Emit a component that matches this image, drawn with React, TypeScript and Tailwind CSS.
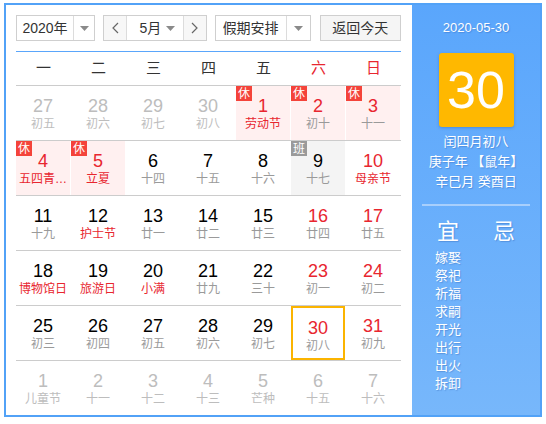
import type { ReactNode } from 'react';

type Day = {
  d: number;
  lunar: string;
  other?: boolean;
  red?: boolean;
  fest?: boolean;
  badge?: '休' | '班';
  selected?: boolean;
};

const weekdays = ['一', '二', '三', '四', '五', '六', '日'];

const rows: Day[][] = [
  [
    { d: 27, lunar: '初五', other: true },
    { d: 28, lunar: '初六', other: true },
    { d: 29, lunar: '初七', other: true },
    { d: 30, lunar: '初八', other: true },
    { d: 1, lunar: '劳动节', red: true, fest: true, badge: '休' },
    { d: 2, lunar: '初十', red: true, badge: '休' },
    { d: 3, lunar: '十一', red: true, badge: '休' },
  ],
  [
    { d: 4, lunar: '五四青…', red: true, fest: true, badge: '休' },
    { d: 5, lunar: '立夏', red: true, fest: true, badge: '休' },
    { d: 6, lunar: '十四' },
    { d: 7, lunar: '十五' },
    { d: 8, lunar: '十六' },
    { d: 9, lunar: '十七', badge: '班' },
    { d: 10, lunar: '母亲节', red: true, fest: true },
  ],
  [
    { d: 11, lunar: '十九' },
    { d: 12, lunar: '护士节', fest: true },
    { d: 13, lunar: '廿一' },
    { d: 14, lunar: '廿二' },
    { d: 15, lunar: '廿三' },
    { d: 16, lunar: '廿四', red: true },
    { d: 17, lunar: '廿五', red: true },
  ],
  [
    { d: 18, lunar: '博物馆日', fest: true },
    { d: 19, lunar: '旅游日', fest: true },
    { d: 20, lunar: '小满', fest: true },
    { d: 21, lunar: '廿九' },
    { d: 22, lunar: '三十' },
    { d: 23, lunar: '初一', red: true },
    { d: 24, lunar: '初二', red: true },
  ],
  [
    { d: 25, lunar: '初三' },
    { d: 26, lunar: '初四' },
    { d: 27, lunar: '初五' },
    { d: 28, lunar: '初六' },
    { d: 29, lunar: '初七' },
    { d: 30, lunar: '初八', red: true, selected: true },
    { d: 31, lunar: '初九', red: true },
  ],
  [
    { d: 1, lunar: '儿童节', other: true },
    { d: 2, lunar: '十一', other: true },
    { d: 3, lunar: '十二', other: true },
    { d: 4, lunar: '十三', other: true },
    { d: 5, lunar: '芒种', other: true },
    { d: 6, lunar: '十五', other: true },
    { d: 7, lunar: '十六', other: true },
  ],
];

const yi = ['嫁娶', '祭祀', '祈福', '求嗣', '开光', '出行', '出火', '拆卸'];

function Caret() {
  return (
    <svg width="9" height="5" viewBox="0 0 9 5">
      <path d="M0 0h9L4.5 5z" fill="#8a8a8a" />
    </svg>
  );
}

function Chevron({ dir }: { dir: 'left' | 'right' }) {
  return (
    <svg width="7" height="12" viewBox="0 0 7 12">
      <path
        d={dir === 'left' ? 'M6 1L1 6l5 5' : 'M1 1l5 5-5 5'}
        fill="none"
        stroke="#666"
        strokeWidth="1.2"
      />
    </svg>
  );
}

function Select({ label, w, textW }: { label: string; w: string; textW: string }) {
  return (
    <div className={`flex h-[26px] border border-[#cfcfcf] bg-white ${w}`}>
      <div className={`flex items-center justify-center text-[14px] text-[#333] ${textW}`}>
        {label}
      </div>
      <div className="flex flex-1 items-center justify-center border-l border-[#dcdcdc]">
        <Caret />
      </div>
    </div>
  );
}

function Cell({ day }: { day: Day }) {
  const bg = day.badge === '休' ? 'bg-[#fff0f0]' : day.badge === '班' ? 'bg-[#f4f4f4]' : '';
  const numColor = day.other ? 'text-[#bdbdbd]' : day.red ? 'text-[#e8262f]' : 'text-black';
  const lunarColor = day.other
    ? 'text-[#bdbdbd]'
    : day.fest
      ? 'text-[#e8262f]'
      : 'text-[#9a9a9a]';
  return (
    <div className="w-[55px] pr-px">
      <div
        className={`relative flex h-[54px] flex-col items-center pt-[10px] ${bg} ${
          day.selected ? 'border-2 border-[#fbb400] pt-[8px]' : ''
        }`}
      >
        {day.badge && (
          <span
            className={`absolute left-0 top-0 flex h-[15px] w-[16px] items-center justify-center text-[12px] leading-none text-white ${
              day.badge === '休' ? 'bg-[#f4433a]' : 'bg-[#9a9a9a]'
            }`}
          >
            {day.badge}
          </span>
        )}
        <span className={`text-[18px] leading-[20px] ${numColor}`}>{day.d}</span>
        <span className={`whitespace-nowrap text-[12px] leading-[16px] ${lunarColor}`}>
          {day.lunar}
        </span>
      </div>
    </div>
  );
}

function PanelText({ children, className = '' }: { children: ReactNode; className?: string }) {
  return (
    <div className={`text-center text-white [text-shadow:1px_1px_1px_rgba(40,90,170,0.35)] ${className}`}>
      {children}
    </div>
  );
}

export default function App() {
  return (
    <div
      className="pl-[4px] pt-[3px]"
      style={{ fontFamily: '"Liberation Sans", "Noto Sans CJK SC", sans-serif' }}
    >
      <div className="flex h-[414px] w-[538px] border-2 border-[#52a2f7] bg-white">
        {/* calendar */}
        <div className="w-[406px] pl-[10px] pr-[11px] pt-[10px]">
          <div className="flex items-center border-b border-[#5aa6fb] pb-[10px]">
            <Select label="2020年" w="w-[80px]" textW="w-[56px]" />
            <div className="ml-[8px] flex h-[26px] w-[104px] border border-[#cfcfcf] bg-white">
              <div className="flex w-[22px] items-center justify-center bg-[#f7f7f7]">
                <Chevron dir="left" />
              </div>
              <div className="flex flex-1 items-center border-x border-[#dcdcdc] pl-[12px] pr-[8px]">
                <span className="flex-1 text-[14px] text-[#333]">5月</span>
                <Caret />
              </div>
              <div className="flex w-[22px] items-center justify-center bg-[#f7f7f7]">
                <Chevron dir="right" />
              </div>
            </div>
            <div className="ml-[8px]">
              <Select label="假期安排" w="w-[96px]" textW="w-[70px]" />
            </div>
            <button className="ml-[9px] flex h-[26px] w-[82px] items-center justify-center border border-[#cfcfcf] bg-[#f5f5f5] text-[14px] text-[#333]">
              返回今天
            </button>
          </div>

          <div className="flex h-[34px] items-center border-b border-[#cccccc]">
            {weekdays.map((w, i) => (
              <div
                key={w}
                className={`w-[55px] text-center text-[15px] ${i >= 5 ? 'text-[#e8262f]' : 'text-[#333]'}`}
              >
                {w}
              </div>
            ))}
          </div>

          {rows.map((row, ri) => (
            <div
              key={ri}
              className={`flex ${ri < rows.length - 1 ? 'border-b border-[#cccccc]' : ''}`}
            >
              {row.map((day, ci) => (
                <Cell key={ci} day={day} />
              ))}
            </div>
          ))}
        </div>

        {/* side panel */}
        <div className="flex w-[128px] flex-col bg-linear-to-b from-[#5aa6fc] to-[#77b7fb] px-[8px]">
          <PanelText className="mt-[13px] text-[13px] leading-[20px]">2020-05-30</PanelText>
          <div className="mx-auto mt-[15px] flex h-[74px] w-[75px] items-center justify-center rounded-[3px] bg-[#ffb800] shadow-[0_1px_3px_rgba(30,80,160,0.35)]">
            <span className="text-[52px] leading-none text-white">30</span>
          </div>
          <div className="mt-[5px]">
            <PanelText className="text-[13px] leading-[20px]">闰四月初八</PanelText>
            <PanelText className="text-[13px] leading-[20px]">庚子年 【鼠年】</PanelText>
            <PanelText className="text-[13px] leading-[20px]">辛巳月 癸酉日</PanelText>
          </div>
          <div className="mx-[2px] mt-[12px] h-[2px] bg-[#a8cffc]" />
          <div className="mt-[13px] grid grid-cols-2">
            <PanelText className="text-[22px] leading-[26px]">宜</PanelText>
            <PanelText className="text-[22px] leading-[26px]">忌</PanelText>
            <div className="mt-[4px] flex flex-col">
              {yi.map((t) => (
                <PanelText key={t} className="text-[13px] leading-[18px]">
                  {t}
                </PanelText>
              ))}
            </div>
          </div>
        </div>
      </div>
    </div>
  );
}
